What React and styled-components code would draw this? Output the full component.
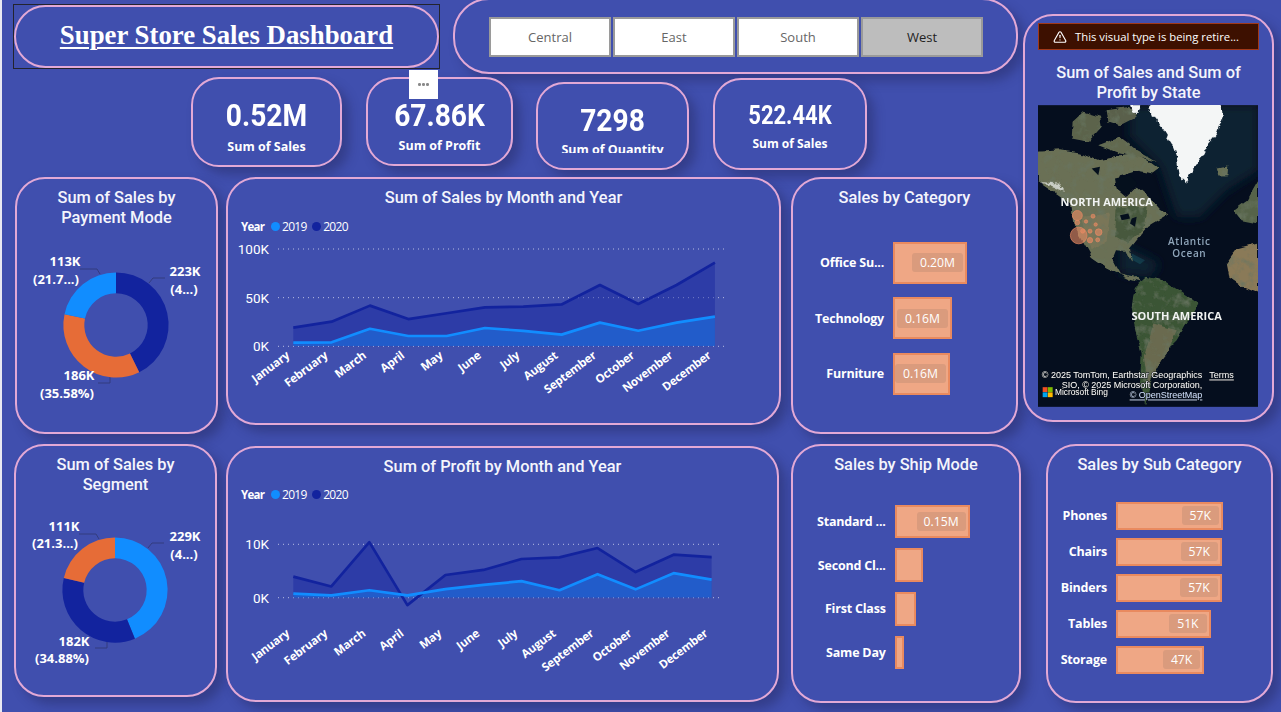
import React from "react";
import styled, { createGlobalStyle } from "styled-components";
import { AlertTriangle } from "lucide-react";

const BG = "#404fae";
const LIGHT = "#118dff";
const DARK = "#12239e";
const ORANGE = "#e66c37";
const MONTHS = ["January", "February", "March", "April", "May", "June", "July", "August", "September", "October", "November", "December"];
const HEAD = `"Roboto", "Liberation Sans", sans-serif`;
const BODY = `"Open Sans", "Noto Sans", sans-serif`;

const GlobalStyle = createGlobalStyle`
  html, body { margin: 0; padding: 0; background: ${BG}; }
  * { box-sizing: border-box; }
`;

const Page = styled.div`
  position: relative;
  width: 1281px;
  height: 712px;
  overflow: hidden;
  background: ${BG};
  border-left: 2px solid #e9e9f2;
  font-family: ${BODY};
  color: #fff;
`;

const Upper = styled.div`
  display: flex;
  height: 445px;
  align-items: flex-start;
`;

const LeftCol = styled.div`
  width: 1016px;
  flex: none;
`;

const Strip = styled.div`
  display: flex;
  align-items: flex-start;
  height: 77px;
`;

const Row = styled.div`
  display: flex;
  align-items: flex-start;
  height: ${(p) => p.$h}px;
  margin-top: ${(p) => p.$mt || 0}px;
`;

const Card = styled.div`
  flex: none;
  position: relative;
  width: ${(p) => p.$w}px;
  height: ${(p) => p.$h}px;
  margin-left: ${(p) => p.$ml || 0}px;
  margin-top: ${(p) => p.$mt || 0}px;
  padding-top: ${(p) => (p.$pt === undefined ? 9 : p.$pt)}px;
  background: ${BG};
  border: 2px solid #e2a9d6;
  border-radius: ${(p) => p.$r || 30}px;
  box-shadow: 7px 7px 11px rgba(32, 36, 84, 0.4);
`;

const TitleFrame = styled.div`
  flex: none;
  width: 427px;
  height: 65px;
  margin: 4px 0 0 11px;
  border: 1px solid #23242e;
  position: relative;
  z-index: 2;
`;

const MainTitle = styled.div`
  height: 100%;
  display: flex;
  align-items: center;
  justify-content: center;
  padding-bottom: 2px;
  background: ${BG};
  border: 2px solid #e2a9d6;
  border-radius: 32px;
  font-family: "Liberation Serif", serif;
  font-weight: 700;
  font-size: 26.8px;
  text-decoration: underline;
  text-decoration-thickness: 2px;
  text-underline-offset: 3px;
`;

const Buttons = styled.div`
  display: flex;
  gap: 2px;
  padding: 17px 0 0 34px;
`;

const SlicerButton = styled.div`
  width: 122px;
  height: 40px;
  display: flex;
  align-items: center;
  justify-content: center;
  background: ${(p) => (p.$active ? "#bdbdbd" : "#fff")};
  border: 2px solid #9a9a9a;
  color: ${(p) => (p.$active ? "#222" : "#666")};
  font-size: 13px;
`;

const Value = styled.div`
  text-align: center;
  font-family: ${HEAD};
  font-weight: 700;
  font-size: ${(p) => p.$size}px;
  line-height: ${(p) => p.$lh}px;
  transform: scaleX(0.88);
`;

const KpiLabel = styled.div`
  text-align: center;
  font-weight: 700;
  font-size: ${(p) => p.$size || 12.5}px;
  line-height: 18px;
  margin-top: ${(p) => p.$mt}px;
  height: ${(p) => p.$clip || 18}px;
  overflow: hidden;
`;

const Dots = styled.div`
  position: absolute;
  left: 407px;
  top: 70px;
  width: 29px;
  height: 29px;
  z-index: 3;
  background: #fff;
  display: flex;
  justify-content: center;
  padding-top: 13px;
  gap: 1.5px;
  span {
    width: 2.5px;
    height: 2.5px;
    border-radius: 50%;
    background: #8a8a8a;
  }
`;

const ChartTitle = styled.div`
  text-align: center;
  font-family: ${HEAD};
  font-weight: 500;
  font-size: 16.4px;
  line-height: 19.5px;
  color: #f4f5fc;
`;

const Legend = styled.div`
  display: flex;
  align-items: center;
  height: 16px;
  margin: ${(p) => p.$mt}px 0 0 13px;
  font-size: 12px;
  letter-spacing: -0.7px;
  b {
    width: 30px;
    font-size: 11.5px;
    font-weight: 700;
  }
`;

const Dot = styled.i`
  width: 9px;
  height: 9px;
  border-radius: 50%;
  margin: 0 2px 0 ${(p) => p.$ml}px;
  background: ${(p) => p.$c};
`;

const Plot = styled.svg`
  display: block;
  overflow: visible;
  margin-top: ${(p) => p.$mt}px;
  text {
    fill: #fff;
  }
`;

const BarList = styled.div`
  display: flex;
  flex-direction: column;
  gap: ${(p) => p.$gap}px;
  margin-top: ${(p) => p.$mt}px;
`;

const BarRow = styled.div`
  display: flex;
  align-items: center;
  height: ${(p) => p.$h}px;
`;

const BarLabel = styled.div`
  flex: none;
  width: ${(p) => p.$w}px;
  margin-right: 9px;
  text-align: right;
  font-weight: 700;
  font-size: 12.5px;
  letter-spacing: -0.2px;
  white-space: nowrap;
`;

const Bar = styled.div`
  height: 100%;
  display: flex;
  align-items: center;
  justify-content: flex-end;
  padding-right: 2px;
  background: #efa785;
  border: 2px solid #e98a5f;
`;

const Pill = styled.span`
  height: 19px;
  padding: 0 ${(p) => p.$pad}px;
  display: flex;
  align-items: center;
  border-radius: 3px;
  background: #da9b7d;
  font-size: 12.2px;
`;

const Banner = styled.div`
  height: 27px;
  margin: 0 0 0 13px;
  width: 221px;
  display: flex;
  align-items: center;
  padding-left: 14px;
  gap: 8px;
  background: #3d1000;
  border: 1px solid #a1391a;
  font-size: 11.3px;
`;

const MapTitle = styled(ChartTitle)`
  margin-top: 13px;
`;

const MapBox = styled.svg`
  display: block;
  margin: 3px 0 0 13px;
`;

function LineChart({ w, h, mt, top, zero, scale, x0, step, gridRight, ticks, data, labelY }) {
  const y = (v) => zero - v * scale;
  const pts = (arr) => arr.map((v, i) => `${x0 + i * step},${y(v)}`).join(" ");
  const area = (arr) => `${x0},${zero} ${pts(arr)} ${x0 + 11 * step},${zero}`;
  const clipId = `clip${top}`;
  return (
    <Plot width={w} height={h} $mt={mt}>
      <clipPath id={clipId}>
        <rect x="0" y="0" width={w} height={zero} />
      </clipPath>
      {ticks.map((t) => (
        <g key={t}>
          <line x1="50" x2={gridRight} y1={y(t)} y2={y(t)} stroke="#dfe2f5" strokeOpacity="0.75" strokeDasharray="1 4" />
          <text x="41" y={y(t)} textAnchor="end" dominantBaseline="central" fontFamily={HEAD} fontSize="13.5">
            {t / 1000 === 0 ? "0K" : `${t / 1000}K`}
          </text>
        </g>
      ))}
      <g clipPath={`url(#${clipId})`}>
        <polygon points={area(data[1])} fill={DARK} fillOpacity="0.42" />
        <polygon points={area(data[0])} fill={LIGHT} fillOpacity="0.4" />
      </g>
      <polyline points={pts(data[1])} fill="none" stroke={DARK} strokeWidth="2.7" strokeLinejoin="round" />
      <polyline points={pts(data[0])} fill="none" stroke={LIGHT} strokeWidth="2.7" strokeLinejoin="round" />
      {MONTHS.map((m, i) => {
        const lx = x0 + i * step - 3;
        return (
          <text key={m} x={lx} y={labelY} textAnchor="end" fontFamily={BODY} fontWeight="700" fontSize="11.6" letterSpacing="-0.2" transform={`rotate(-37 ${lx} ${labelY})`}>
            {m}
          </text>
        );
      })}
    </Plot>
  );
}

function arc(cx, cy, r0, r1, a0, a1) {
  const p = (r, a) => [cx + r * Math.sin(a), cy - r * Math.cos(a)];
  const large = a1 - a0 > Math.PI ? 1 : 0;
  const [x1, y1] = p(r1, a0);
  const [x2, y2] = p(r1, a1);
  const [x3, y3] = p(r0, a1);
  const [x4, y4] = p(r0, a0);
  return `M${x1} ${y1}A${r1} ${r1} 0 ${large} 1 ${x2} ${y2}L${x3} ${y3}A${r0} ${r0} 0 ${large} 0 ${x4} ${y4}Z`;
}

function Donut({ mt, slices, labels, leaders }) {
  let angle = 0;
  return (
    <Plot width={199} height={190} $mt={mt}>
      {leaders.map((d) => (
        <polyline key={d} points={d} fill="none" stroke="#333c7e" strokeWidth="1" />
      ))}
      {slices.map((s) => {
        const a0 = angle;
        angle += s.share * Math.PI * 2;
        return <path key={s.color} d={arc(99, 90, 31.7, 52.6, a0, angle)} fill={s.color} />;
      })}
      {labels.map((l) => (
        <text key={l.t} x={l.x} y={l.y} textAnchor="middle" dominantBaseline="central" fontFamily={BODY} fontWeight="700" fontSize="13">
          {l.t}
        </text>
      ))}
    </Plot>
  );
}

function Bars({ mt, gap, h, labelW, rows, pad }) {
  return (
    <BarList $mt={mt} $gap={gap}>
      {rows.map((r) => (
        <BarRow key={r.name} $h={h}>
          <BarLabel $w={labelW}>{r.name}</BarLabel>
          <Bar style={{ width: r.w }}>{r.v && <Pill $pad={pad}>{r.v}</Pill>}</Bar>
        </BarRow>
      ))}
    </BarList>
  );
}

function WorldMap() {
  return (
    <MapBox width="220" height="302" viewBox="54 285 660 905">
      <defs>
        <filter id="rough" x="-10%" y="-10%" width="120%" height="120%">
          <feTurbulence type="fractalNoise" baseFrequency="0.03" numOctaves="5" seed="7" result="n" />
          <feDisplacementMap in="SourceGraphic" in2="n" scale="16" xChannelSelector="R" yChannelSelector="G" result="d" />
          <feTurbulence type="fractalNoise" baseFrequency="0.035" numOctaves="4" seed="3" />
          <feColorMatrix values="0 0 0 0 0.14  0 0 0 0 0.18  0 0 0 0 0.12  2.2 0 0 0 -1.05" result="m" />
          <feComposite in="m" in2="d" operator="in" result="t" />
          <feMerge>
            <feMergeNode in="d" />
            <feMergeNode in="t" />
          </feMerge>
        </filter>
        <filter id="ice" x="-10%" y="-10%" width="120%" height="120%">
          <feTurbulence type="fractalNoise" baseFrequency="0.05" numOctaves="4" seed="5" result="n" />
          <feDisplacementMap in="SourceGraphic" in2="n" scale="18" xChannelSelector="R" yChannelSelector="G" />
        </filter>
        <filter id="soft">
          <feGaussianBlur stdDeviation="16" />
        </filter>
      </defs>
      <rect x="54" y="285" width="660" height="905" fill="#050e1e" />
      <g filter="url(#soft)" fill="#0c2233">
        <path d="M330 285H714V480L620 540L540 620L470 620L420 470L330 380Z" />
        <path d="M300 700L420 760L390 800L300 790Z" />
      </g>
      <g filter="url(#rough)">
        <path fill="#6a7054" d="M54 425L120 420L180 430L230 452L290 440L340 432L385 452L415 475L395 490L350 480L300 495L285 530L320 560L350 530L385 560L420 600L448 612L385 650L350 690L330 715L336 755L318 722L285 720L275 745L300 790L345 800L362 815L330 805L262 772L215 740L190 695L160 640L155 590L120 560L54 515Z" />
        <path fill="#5c634c" d="M158 335L190 305L240 320L245 350L205 395L155 385Z" />
        <path fill="#626950" d="M235 405L300 380L350 420L410 455L370 445L300 430Z" />
        <path fill="#5a614b" d="M260 300L330 290L350 320L300 345L265 335Z" />
        <path fill="#3a5536" d="M345 830L380 800L430 810L482 845L535 880L505 930L470 990L430 1030L410 1070L390 1120L376 1188L360 1120L365 1030L345 960L335 890Z" />
        <path fill="#6b6a4f" d="M400 940L470 960L440 1030L410 1070L385 1130L372 1040Z" />
        <path fill="#8a7a58" d="M714 698L650 715L618 760L625 800L670 832L714 850Z" />
        <path fill="#56634a" d="M714 510L680 570L640 600L665 630L714 640Z" />
        <path fill="#687054" d="M590 475L625 468L622 495L595 496Z" />
        <path fill="#46583c" d="M290 590L380 590L370 660L320 700L285 680Z" />
        <path fill="#7a7659" d="M185 620L270 610L260 690L215 720Z" />
      </g>
      <g fill="#f4f6f6" filter="url(#ice)">
        <path d="M385 278L605 278L608 320L590 370L565 400L545 440L505 500L498 522L480 505L470 440L455 400L430 360L400 320Z" />
        <path d="M330 285L365 285L355 305L335 305Z" />
        <path d="M60 515L120 520L135 545L95 530Z" opacity="0.7" />
      </g>
      <path fill="#05101d" d="M285 505L330 495L352 520L322 552L290 535Z" />
      <g fill="#05101d">
        <path d="M300 615L325 610L330 625L305 630Z" />
        <path d="M335 625L350 620L345 650L330 640Z" />
        <path d="M215 475L240 470L235 495Z" />
      </g>
      <path fill="#1d6a78" opacity="0.35" d="M335 730L375 750L360 762L335 748Z" />
      <g fill="#e98a63" fillOpacity="0.62" stroke="#e98a63" strokeWidth="2">
        <circle cx="172" cy="616" r="15" />
        <circle cx="172" cy="637" r="7" />
        <circle cx="198" cy="634" r="5" />
        <circle cx="219" cy="618" r="6" />
        <circle cx="227" cy="643" r="5" />
        <circle cx="236" cy="666" r="10" />
        <circle cx="210" cy="663" r="6" />
        <circle cx="176" cy="676" r="25" />
        <circle cx="188" cy="663" r="6" />
        <circle cx="210" cy="690" r="8" />
        <circle cx="233" cy="689" r="6" />
      </g>
      <g fontFamily={BODY} fontWeight="700" fontSize="33" fill="#f1f3f2" textAnchor="middle">
        <text x="260" y="587">NORTH AMERICA</text>
        <text x="470" y="929">SOUTH AMERICA</text>
      </g>
      <g fontFamily={BODY} fontWeight="600" fontSize="30" fill="#8fa5ba" textAnchor="middle" letterSpacing="2">
        <text x="508" y="704">Atlantic</text>
        <text x="508" y="740">Ocean</text>
      </g>
      <g fontFamily={`"Liberation Sans", sans-serif`} fontSize="27" fill="#fff" stroke="#10151c" strokeWidth="3" paintOrder="stroke">
        <text x="547" y="1105" textAnchor="end">© 2025 TomTom, Earthstar Geographics</text>
        <text x="568" y="1105" textDecoration="underline">Terms</text>
        <text x="547" y="1135" textAnchor="end">SIO, © 2025 Microsoft Corporation,</text>
        <text x="547" y="1165" textAnchor="end" fill="#cfe0ff" textDecoration="underline">© OpenStreetMap</text>
        <text x="105" y="1154" fontSize="25">Microsoft Bing</text>
      </g>
      <rect x="68" y="1131" width="14.5" height="14.5" fill="#f25022" />
      <rect x="83.5" y="1131" width="14.5" height="14.5" fill="#7fba00" />
      <rect x="68" y="1146.5" width="14.5" height="14.5" fill="#00a4ef" />
      <rect x="83.5" y="1146.5" width="14.5" height="14.5" fill="#ffb900" />
    </MapBox>
  );
}

export default function App() {
  return (
    <Page>
      <GlobalStyle />
      <Upper>
        <LeftCol>
          <Strip>
            <TitleFrame>
              <MainTitle>Super Store Sales Dashboard</MainTitle>
            </TitleFrame>
            <Card $w={565} $h={76} $ml={13} $mt={-2} $r={36} $pt={0}>
              <Buttons>
                <SlicerButton>Central</SlicerButton>
                <SlicerButton>East</SlicerButton>
                <SlicerButton>South</SlicerButton>
                <SlicerButton $active>West</SlicerButton>
              </Buttons>
            </Card>
          </Strip>
          <Row $h={93}>
            <Card $w={151} $h={90} $ml={189} $pt={18} $r={28}>
              <Value $size={32} $lh={36}>0.52M</Value>
              <KpiLabel $mt={5}>Sum of Sales</KpiLabel>
            </Card>
            <Card $w={147} $h={89} $ml={24} $pt={18} $r={28}>
              <Value $size={32} $lh={36}>67.86K</Value>
              <KpiLabel $mt={4}>Sum of Profit</KpiLabel>
            </Card>
            <Dots><span /><span /><span /></Dots>
            <Card $w={153} $h={88} $ml={23} $mt={5} $pt={18} $r={28}>
              <Value $size={32} $lh={36}>7298</Value>
              <KpiLabel $mt={3} $clip={12}>Sum of Quantity</KpiLabel>
            </Card>
            <Card $w={154} $h={92} $ml={24} $mt={1} $pt={21} $r={28}>
              <Value $size={25} $lh={30}>522.44K</Value>
              <KpiLabel $mt={4} $size={12}>Sum of Sales</KpiLabel>
            </Card>
          </Row>
          <Row $h={257} $mt={7}>
            <Card $w={203} $h={257} $ml={13}>
              <ChartTitle>Sum of Sales by<br />Payment Mode</ChartTitle>
              <Donut
                mt={8}
                slices={[
                  { color: DARK, share: 0.4272 },
                  { color: ORANGE, share: 0.3558 },
                  { color: LIGHT, share: 0.217 },
                ]}
                labels={[
                  { t: "113K", x: 48, y: 26 },
                  { t: "(21.7...)", x: 39, y: 44 },
                  { t: "223K", x: 168, y: 36 },
                  { t: "(4...)", x: 167, y: 54 },
                  { t: "186K", x: 62, y: 140 },
                  { t: "(35.58%)", x: 50, y: 158 },
                ]}
                leaders={["63,34 80,34 83,39", "148,43 136,43 132,48", "93,142 93,148 81,148"]}
              />
            </Card>
            <Card $w={555} $h={248} $ml={8}>
              <ChartTitle>Sum of Sales by Month and Year</ChartTitle>
              <Legend $mt={10.5}>
                <b>Year</b>
                <Dot $c={LIGHT} $ml={0} />2019
                <Dot $c={DARK} $ml={5.5} />2020
              </Legend>
              <LineChart
                w={551}
                h={180}
                mt={6}
                top={240}
                zero={106.3}
                scale={0.000973}
                x0={65.3}
                step={38.33}
                gridRight={500}
                ticks={[0, 50000, 100000]}
                labelY={117}
                data={[
                  [3800, 4100, 18000, 10600, 10600, 18800, 15800, 12000, 24300, 16000, 24300, 30500],
                  [19200, 25300, 41800, 28000, 34000, 40000, 40700, 43000, 63000, 43500, 63000, 86000],
                ]}
              />
            </Card>
            <Card $w={227} $h={257} $ml={10}>
              <ChartTitle>Sales by Category</ChartTitle>
              <Bars
                mt={34}
                gap={13.5}
                h={42}
                labelW={91}
                pad={8}
                rows={[
                  { name: "Office Su...", w: 74, v: "0.20M" },
                  { name: "Technology", w: 59, v: "0.16M" },
                  { name: "Furniture", w: 57, v: "0.16M" },
                ]}
              />
            </Card>
          </Row>
        </LeftCol>
        <Card $w={251} $h={408} $ml={5} $mt={14} $pt={7} $r={30}>
          <Banner>
            <AlertTriangle size={14} color="#fff" />
            This visual type is being retire...
          </Banner>
          <MapTitle>Sum of Sales and Sum of<br />Profit by State</MapTitle>
          <WorldMap />
        </Card>
      </Upper>
      <Row $h={268} $mt={-1}>
        <Card $w={203} $h={253} $ml={12}>
          <ChartTitle>Sum of Sales by<br />Segment</ChartTitle>
          <Donut
            mt={6}
            slices={[
              { color: LIGHT, share: 0.4382 },
              { color: DARK, share: 0.3488 },
              { color: ORANGE, share: 0.213 },
            ]}
            labels={[
              { t: "111K", x: 48, y: 26 },
              { t: "(21.3...)", x: 39, y: 43 },
              { t: "229K", x: 169, y: 36 },
              { t: "(4...)", x: 168, y: 54 },
              { t: "182K", x: 58, y: 141 },
              { t: "(34.88%)", x: 46, y: 158 },
            ]}
            leaders={["63,34 80,34 83,39", "148,43 136,43 132,48", "91,142 91,148 79,148"]}
          />
        </Card>
        <Card $w={553} $h={256} $ml={9} $mt={2}>
          <ChartTitle>Sum of Profit by Month and Year</ChartTitle>
          <Legend $mt={9.5}>
            <b>Year</b>
            <Dot $c={LIGHT} $ml={0} />2019
            <Dot $c={DARK} $ml={5.5} />2020
          </Legend>
          <LineChart
            w={549}
            h={180}
            mt={6}
            top={508}
            zero={89.7}
            scale={0.00534}
            x0={65.3}
            step={38.03}
            gridRight={495}
            ticks={[0, 10000]}
            labelY={127}
            data={[
              [750, 440, 1400, 440, 1600, 2400, 3100, 1400, 4400, 1560, 4600, 3400],
              [3940, 2100, 10400, -1400, 4250, 5200, 7250, 7560, 9300, 4800, 8060, 7600],
            ]}
          />
        </Card>
        <Card $w={230} $h={259} $ml={12}>
          <ChartTitle>Sales by Ship Mode</ChartTitle>
          <Bars
            mt={30}
            gap={10.3}
            h={33.5}
            labelW={92.7}
            pad={7}
            rows={[
              { name: "Standard ...", w: 75, v: "0.15M" },
              { name: "Second Cl...", w: 28 },
              { name: "First Class", w: 21 },
              { name: "Same Day", w: 9 },
            ]}
          />
        </Card>
        <Card $w={227} $h={259} $ml={25}>
          <ChartTitle>Sales by Sub Category</ChartTitle>
          <Bars
            mt={27}
            gap={8}
            h={28}
            labelW={59}
            pad={8}
            rows={[
              { name: "Phones", w: 107, v: "57K" },
              { name: "Chairs", w: 106, v: "57K" },
              { name: "Binders", w: 105.7, v: "57K" },
              { name: "Tables", w: 94.6, v: "51K" },
              { name: "Storage", w: 88.3, v: "47K" },
            ]}
          />
        </Card>
      </Row>
    </Page>
  );
}
